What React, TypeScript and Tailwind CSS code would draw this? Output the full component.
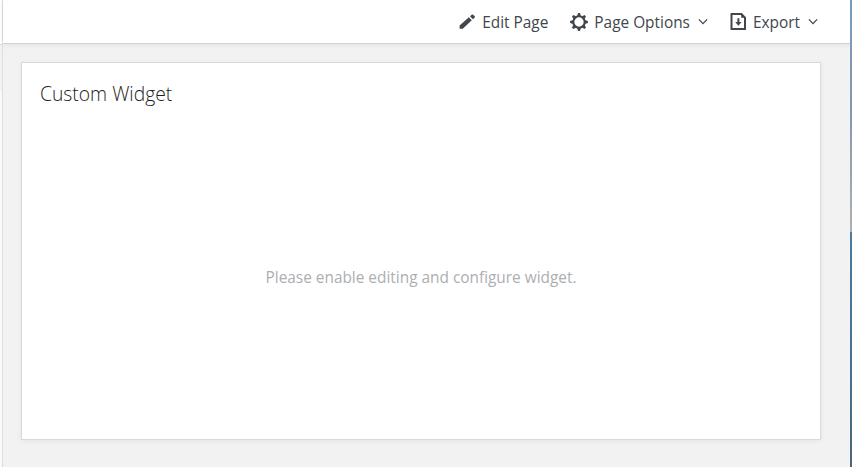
import type { ReactNode } from "react";

function PencilIcon() {
  return (
    <svg width="17" height="17" viewBox="0 0 17 17" fill="#42464d" className="shrink-0">
      <path d="M.6 12.6 9.9 4.3l2.9 2.9-9 8.6H.6zM11 3.2l1.7-1.5q.8-.6 1.5 0l1.5 1.5q.6.7 0 1.4L14 6.2z" />
    </svg>
  );
}

function GearIcon() {
  return (
    <svg width="18" height="18" viewBox="0 0 18 18" className="shrink-0">
      <circle cx="9" cy="9" r="5.7" fill="none" stroke="#42464d" strokeWidth="2.1" />
      <g fill="#42464d">
        {[0, 45, 90, 135, 180, 225, 270, 315].map((angle) => (
          <path key={angle} d="M7.1 3.2 8 .1h2l.9 3.1z" transform={`rotate(${angle} 9 9)`} />
        ))}
      </g>
    </svg>
  );
}

function ExportIcon() {
  return (
    <svg width="17" height="19" viewBox="0 0 17 19" className="shrink-0">
      <path d="M1.5 2h9.9L15 5.6V17H1.5z" fill="none" stroke="#42464d" strokeWidth="2" />
      <path d="M11.2 1.5v4.2h4.2z" fill="#42464d" />
      <path d="M7.4 6.3h2V10h2.2l-3.2 3.8L5.2 10h2.2z" fill="#42464d" />
    </svg>
  );
}

function Chevron() {
  return (
    <svg width="10" height="8" viewBox="0 0 10 8" className="shrink-0">
      <path d="m.9 1.4 4.1 4.2 4.1-4.2" fill="none" stroke="#42464d" strokeWidth="1.3" />
    </svg>
  );
}

function Action({ icon, label, menu }: { icon: ReactNode; label: string; menu?: boolean }) {
  return (
    <button className="flex items-center whitespace-nowrap">
      {icon}
      <span className="ml-1.5 pt-0.5 leading-6">{label}</span>
      {menu && <span className="ml-2"><Chevron /></span>}
    </button>
  );
}

export default function App() {
  return (
    <div className="flex h-[467px] w-[852px] overflow-hidden bg-[#f2f2f2] font-['Open_Sans',sans-serif] text-[15.4px] text-[#42464d]">
      <div className="flex w-[3px] shrink-0 flex-col border-r border-[#dedede]">
        <div className="h-[45px] border-b border-[#dedede] bg-white" />
        <div className="h-[46px] bg-[#f2f2f2]" />
        <div className="flex-1 bg-[#fafafa]" />
      </div>
      <main className="flex min-w-0 flex-1 flex-col">
        <header className="flex h-11 shrink-0 items-center justify-end gap-[22px] border-b border-[#d2d2d2] bg-white pr-8 shadow-[0_1px_5px_rgba(0,0,0,0.07)]">
          <Action icon={<PencilIcon />} label="Edit Page" />
          <Action icon={<GearIcon />} label="Page Options" menu />
          <Action icon={<ExportIcon />} label="Export" menu />
        </header>
        <section className="mt-[18px] ml-[18px] flex h-[378px] w-[800px] flex-col border border-[#d9d9d9] bg-white px-[18px] pt-[17px] shadow-[0_1px_5px_rgba(0,0,0,0.06)]">
          <h1 className="text-[19.3px] leading-7 font-light text-[#1b1e23]">Custom Widget</h1>
          <p className="mt-[158px] text-center leading-6 text-[#adaeb2]">Please enable editing and configure widget.</p>
        </section>
      </main>
      <div className="flex w-0.5 shrink-0 flex-col">
        <div className="h-[232px] bg-linear-to-b from-[#779bbd] via-[#8299ad] to-[#aeb1b3]" />
        <div className="flex-1 bg-linear-to-b from-[#477ca3] to-[#49677c]" />
      </div>
    </div>
  );
}
